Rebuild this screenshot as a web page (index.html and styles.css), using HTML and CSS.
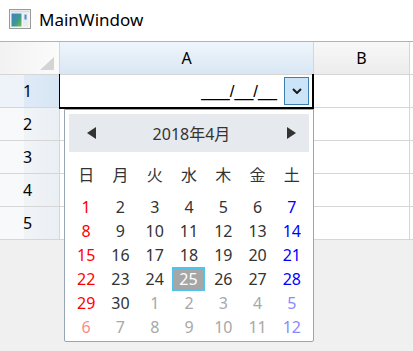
FILE: index.html
```html
<!DOCTYPE html>
<html lang="ja">
<head>
  <meta charset="UTF-8" />
  <title>MainWindow</title>
  <link rel="stylesheet" href="styles.css">
</head>
<body>
  <div class="window">
    <div class="title-bar">
      <svg class="app-icon" width="22" height="20" viewBox="0 0 22 20">
        <defs>
          <linearGradient id="pane" x1="0" y1="0" x2="1" y2="1">
            <stop offset="0" stop-color="#3f7fd0"/>
            <stop offset="0.6" stop-color="#3f9a8a"/>
            <stop offset="1" stop-color="#7cc04a"/>
          </linearGradient>
        </defs>
        <rect x="0.5" y="0.5" width="21" height="19" fill="#f4f4f4" stroke="#9a9a9a"/>
        <rect x="1.5" y="1.5" width="19" height="2" fill="#d8dde3"/>
        <rect x="2.5" y="4.5" width="10" height="13" fill="url(#pane)"/>
        <rect x="14" y="4.5" width="5" height="13" fill="#e8ecef"/>
        <rect x="15.5" y="5.5" width="2" height="5" fill="#4a8ad6"/>
      </svg>
      <span class="title-text">MainWindow</span>
    </div>

    <div class="sheet">
      <div class="hrow">
        <div class="corner"><div class="corner-mark"></div></div>
        <div class="col-head col-a selected">A</div>
        <div class="col-head col-b">B</div>
        <div class="rest"></div>
      </div>
      <div class="row">
        <div class="row-head selected">1</div>
        <div class="cell col-a editing">
          <span class="mask">___/__/__</span>
          <button class="drop-btn">
            <svg width="10" height="6" viewBox="0 0 10 6"><polyline points="1,1 5,5 9,1" fill="none" stroke="#1a1a1a" stroke-width="2"/></svg>
          </button>
        </div>
        <div class="cell col-b"></div>
        <div class="rest"></div>
      </div>
      <div class="row">
        <div class="row-head">2</div>
        <div class="cell col-a"></div>
        <div class="cell col-b"></div>
        <div class="rest"></div>
      </div>
      <div class="row">
        <div class="row-head">3</div>
        <div class="cell col-a"></div>
        <div class="cell col-b"></div>
        <div class="rest"></div>
      </div>
      <div class="row">
        <div class="row-head">4</div>
        <div class="cell col-a"></div>
        <div class="cell col-b"></div>
        <div class="rest"></div>
      </div>
      <div class="row">
        <div class="row-head">5</div>
        <div class="cell col-a"></div>
        <div class="cell col-b"></div>
        <div class="rest"></div>
      </div>
    </div>
    <div class="empty-area"></div>

    <div class="calendar">
      <div class="cal-head">
        <span class="arrow arrow-left"></span>
        <span class="cal-title">2018年4月</span>
        <span class="arrow arrow-right"></span>
      </div>
      <div class="dow">
        <span>日</span><span>月</span><span>火</span><span>水</span><span>木</span><span>金</span><span>土</span>
      </div>
      <div class="days">
        <span class="sun">1</span><span>2</span><span>3</span><span>4</span><span>5</span><span>6</span><span class="sat">7</span>
        <span class="sun">8</span><span>9</span><span>10</span><span>11</span><span>12</span><span>13</span><span class="sat">14</span>
        <span class="sun">15</span><span>16</span><span>17</span><span>18</span><span>19</span><span>20</span><span class="sat">21</span>
        <span class="sun">22</span><span>23</span><span>24</span><span class="today">25</span><span>26</span><span>27</span><span class="sat">28</span>
        <span class="sun">29</span><span>30</span><span class="other">1</span><span class="other">2</span><span class="other">3</span><span class="other">4</span><span class="other sat">5</span>
        <span class="other sun">6</span><span class="other">7</span><span class="other">8</span><span class="other">9</span><span class="other">10</span><span class="other">11</span><span class="other sat">12</span>
      </div>
    </div>
  </div>
</body>
</html>
```

FILE: styles.css
```css
html, body {
  margin: 0;
  padding: 0;
  height: 100%;
  overflow: hidden;
  font-family: "Noto Sans", "Noto Sans CJK JP", sans-serif;
  color: #1e1e1e;
}

.window {
  position: relative;
  height: 351px;
  background: #f0f0f0;
  display: flex;
  flex-direction: column;
}

.title-bar {
  height: 42px;
  box-sizing: border-box;
  background: #fff;
  border-bottom: 1px solid #a7b4c2;
  display: flex;
  align-items: center;
  padding-left: 9px;
  gap: 8px;
}

.app-icon {
  margin-top: -3px;
}

.title-text {
  font-size: 17px;
  color: #000;
  margin-top: -3px;
}

.sheet {
  background: #fff;
}

.hrow, .row {
  display: flex;
  height: 33px;
  box-sizing: border-box;
  border-bottom: 1px solid #d6d6d6;
}

.corner {
  width: 60px;
  box-sizing: border-box;
  border-right: 1px solid #d6d6d6;
  background: linear-gradient(to right, #f2f2f2, #fbfbfb);
  display: flex;
  align-items: flex-end;
  justify-content: flex-end;
  padding: 0 5px 4px 0;
}

.corner-mark {
  width: 14px;
  height: 13px;
  background: #d4d4d4;
  clip-path: polygon(100% 0, 100% 100%, 0 100%);
}

.col-head {
  box-sizing: border-box;
  border-right: 1px solid #d6d6d6;
  display: flex;
  align-items: center;
  justify-content: center;
  font-size: 16px;
  color: #000;
  background: linear-gradient(#f8f8f8, #ececec);
}

.col-head.selected {
  background: linear-gradient(#eff5fb, #d9e7f4);
}

.col-a {
  width: 254px;
}

.col-b {
  width: 96px;
}

.rest {
  flex: 1;
}

.row-head {
  width: 60px;
  box-sizing: border-box;
  border-right: 1px solid #d6d6d6;
  display: flex;
  align-items: center;
  padding-left: 23px;
  font-size: 16px;
  color: #000;
  background: linear-gradient(to right, #f7f9fb 0, #f7f9fb 24px, #f1f4f7 24px, #eaeff4 100%);
}

.row-head.selected {
  background: linear-gradient(to right, #edf3f9 0, #edf3f9 24px, #dfeaf6 24px, #d7e6f4 100%);
}

.cell {
  box-sizing: border-box;
  border-right: 1px solid #d6d6d6;
}

.cell.editing {
  position: relative;
  display: flex;
  align-items: center;
  justify-content: flex-end;
  padding-right: 4px;
  gap: 7px;
}

.cell.editing::after {
  content: "";
  position: absolute;
  top: -1px;
  left: -1px;
  right: -1px;
  bottom: -2px;
  border: 2px solid #000;
  border-top: 0;
  border-left-width: 1px;
  pointer-events: none;
}

.mask {
  font-family: "Liberation Sans", sans-serif;
  font-size: 17px;
  color: #000;
  margin-top: 1px;
}

.drop-btn {
  width: 25px;
  height: 28px;
  padding: 0;
  margin: 0;
  border: 1px solid #3c7fb1;
  background: #cbe4f8;
  display: flex;
  align-items: center;
  justify-content: center;
}

.empty-area {
  flex: 1;
}

.calendar {
  position: absolute;
  left: 64px;
  top: 109px;
  width: 250px;
  height: 233px;
  box-sizing: border-box;
  background: #fff;
  border: 1px solid #98a5b2;
  border-radius: 0 0 2px 2px;
  padding: 4px;
  font-size: 16px;
}

.cal-head {
  height: 38px;
  background: #e6eaef;
  display: flex;
  align-items: center;
  justify-content: space-between;
  padding: 0 13px 0 18px;
}

.cal-title {
  color: #333;
}

.arrow {
  width: 0;
  height: 0;
  border-top: 6px solid transparent;
  border-bottom: 6px solid transparent;
}

.arrow-left {
  border-right: 9px solid #333;
}

.arrow-right {
  border-left: 9px solid #333;
}

.dow, .days {
  display: grid;
  grid-template-columns: repeat(7, 1fr);
  grid-auto-rows: 24px;
  text-align: center;
  color: #333;
}

.dow {
  margin-top: 10px;
}

.days {
  margin-top: 9px;
}

.dow span, .days span {
  display: flex;
  align-items: center;
  justify-content: center;
}

.days .sun { color: #ff0000; }
.days .sat { color: #0000ff; }
.days .other { color: #a8a8a8; }
.days .other.sun { color: #ff8a8a; }
.days .other.sat { color: #8a8aff; }

.days .today {
  background: #a6a6a6;
  color: #fff;
  border: 2px solid #4cc4ee;
  box-sizing: border-box;
  margin: 0 1px 0 0;
}
```
